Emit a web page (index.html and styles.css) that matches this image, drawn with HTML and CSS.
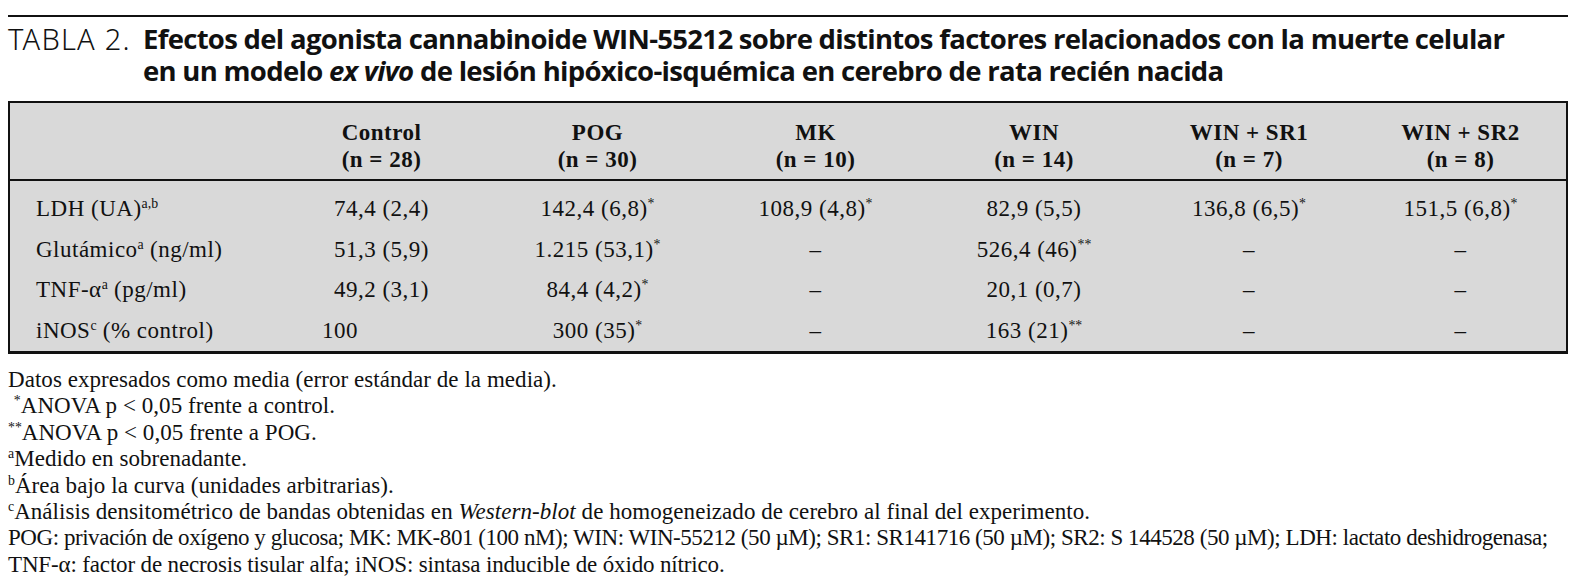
FILE: index.html
```html
<!DOCTYPE html>
<html lang="es">
<head>
<meta charset="utf-8">
<title>Tabla 2</title>
<link rel="stylesheet" href="styles.css">
</head>
<body>
<div class="page">
  <div class="rule"></div>
  <div class="caption">
    <span class="label">TABLA 2.</span>
    <h1 class="title">Efectos del agonista cannabinoide WIN-55212 sobre distintos factores relacionados con la muerte celular<br>en un modelo <em>ex vivo</em> de lesión hipóxico-isquémica en cerebro de rata recién nacida</h1>
  </div>
  <div class="table">
    <div class="row head">
      <div class="cell"></div>
      <div class="cell">Control<br>(n = 28)</div>
      <div class="cell">POG<br>(n = 30)</div>
      <div class="cell">MK<br>(n = 10)</div>
      <div class="cell">WIN<br>(n = 14)</div>
      <div class="cell">WIN + SR1<br>(n = 7)</div>
      <div class="cell">WIN + SR2<br>(n = 8)</div>
    </div>
    <div class="body">
      <div class="row">
        <div class="cell name">LDH (UA)<sup>a,b</sup></div>
        <div class="cell">74,4 (2,4)</div>
        <div class="cell">142,4 (6,8)<sup>*</sup></div>
        <div class="cell">108,9 (4,8)<sup>*</sup></div>
        <div class="cell">82,9 (5,5)</div>
        <div class="cell">136,8 (6,5)<sup>*</sup></div>
        <div class="cell">151,5 (6,8)<sup>*</sup></div>
      </div>
      <div class="row">
        <div class="cell name">Glutámico<sup>a</sup> (ng/ml)</div>
        <div class="cell">51,3 (5,9)</div>
        <div class="cell">1.215 (53,1)<sup>*</sup></div>
        <div class="cell">–</div>
        <div class="cell">526,4 (46)<sup>**</sup></div>
        <div class="cell">–</div>
        <div class="cell">–</div>
      </div>
      <div class="row">
        <div class="cell name">TNF-α<sup>a</sup> (pg/ml)</div>
        <div class="cell">49,2 (3,1)</div>
        <div class="cell">84,4 (4,2)<sup>*</sup></div>
        <div class="cell">–</div>
        <div class="cell">20,1 (0,7)</div>
        <div class="cell">–</div>
        <div class="cell">–</div>
      </div>
      <div class="row">
        <div class="cell name">iNOS<sup>c</sup> (% control)</div>
        <div class="cell flush">100</div>
        <div class="cell">300 (35)<sup>*</sup></div>
        <div class="cell">–</div>
        <div class="cell">163 (21)<sup>**</sup></div>
        <div class="cell">–</div>
        <div class="cell">–</div>
      </div>
    </div>
  </div>
  <div class="notes">
    <p>Datos expresados como media (error estándar de la media).</p>
    <p>&nbsp;<sup>*</sup>ANOVA p &lt; 0,05 frente a control.</p>
    <p><sup>**</sup>ANOVA p &lt; 0,05 frente a POG.</p>
    <p><sup>a</sup>Medido en sobrenadante.</p>
    <p><sup>b</sup>Área bajo la curva (unidades arbitrarias).</p>
    <p><sup>c</sup>Análisis densitométrico de bandas obtenidas en <em>Western-blot</em> de homogeneizado de cerebro al final del experimento.</p>
    <p class="abbr"><span class="tight">POG: privación de oxígeno y glucosa; MK: MK-801 (100 nM); WIN: WIN-55212 (50 µM); SR1: SR141716 (50 µM); SR2: S 144528 (50 µM); LDH: lactato deshidrogenasa;</span><br>TNF-α: factor de necrosis tisular alfa; iNOS: sintasa inducible de óxido nítrico.</p>
  </div>
</div>
</body>
</html>
```

FILE: styles.css
```css
html, body {
  margin: 0;
  padding: 0;
  background: #ffffff;
  color: #111111;
}

.page {
  padding: 15px 7px 0 8px;
  width: 1560px;
  font-family: "Liberation Serif", "DejaVu Serif", serif;
}

.rule {
  height: 2px;
  background: #111111;
}

.caption {
  display: flex;
  align-items: flex-start;
  margin-top: 6px;
  font-size: 29px;
  line-height: 32px;
}

.label {
  width: 135px;
  flex: none;
  font-family: "Noto Sans", "Liberation Sans", sans-serif;
  font-stretch: 87.5%;
  font-weight: 300;
  letter-spacing: 1.2px;
}

.title {
  margin: 0;
  font-family: "Open Sans", "Liberation Sans", sans-serif;
  font-stretch: 90%;
  font-size: 27.5px;
  font-weight: bold;
  line-height: 32px;
  letter-spacing: -0.7px;
  white-space: nowrap;
}

.title em {
  font-style: italic;
}

.table {
  margin-top: 14px;
  background: #d9d9d9;
  border: 2px solid #111111;
  border-bottom-width: 3px;
  font-size: 23px;
  letter-spacing: 0.5px;
}

.row {
  display: grid;
  grid-template-columns: 264px 215px 217px 219px 218px 212px 1fr;
}

.head {
  padding: 16px 0 6px;
  border-bottom: 2px solid #111111;
  font-weight: bold;
  line-height: 27px;
}

.body {
  padding-top: 8px;
}

.body .row {
  height: 40.5px;
  line-height: 40.5px;
}

.cell {
  text-align: center;
  white-space: nowrap;
}

.cell.name {
  text-align: left;
  padding-left: 26px;
}

.cell.flush {
  text-align: left;
  padding-left: 48px;
}

sup {
  font-size: 0.6em;
  line-height: 0;
  vertical-align: 0.55em;
  letter-spacing: 0;
}

.notes {
  margin-top: 13px;
  font-size: 23px;
  line-height: 26.4px;
  letter-spacing: 0.05px;
}

.notes p {
  margin: 0;
  white-space: nowrap;
}

.notes .abbr {
  letter-spacing: -0.15px;
}

.notes .tight {
  letter-spacing: -0.45px;
}
```
